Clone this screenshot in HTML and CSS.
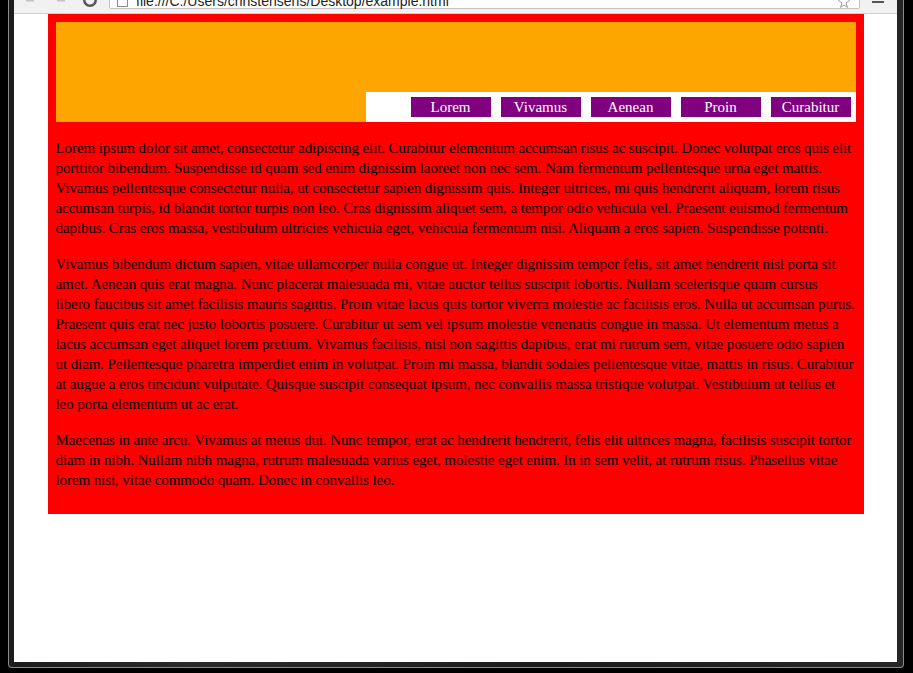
FILE: index.html
```html
<!DOCTYPE html>
<html>
<head>
<meta charset="utf-8">
<title>example</title>
<link rel="stylesheet" href="styles.css">
</head>
<body>
<div class="screen">
  <div class="win">
    <div class="toolbar">
      <div class="navbtns">
        <svg width="90" height="13" viewBox="0 0 90 13">
          <rect x="12" y="0" width="8" height="1.5" fill="#c4c4c4"/>
          <rect x="43" y="0" width="8" height="1.5" fill="#c4c4c4"/>
          <path d="M69 0 A7 7 0 0 0 83 0 L80.5 0 A4.5 4.5 0 0 1 71.5 0 Z" fill="#555"/>
        </svg>
      </div>
      <div class="omnibox">
        <span class="pageicon"></span>
        <span class="url">file:///C:/Users/christensens/Desktop/example.html</span>
        <svg class="star" width="14" height="8" viewBox="0 0 14 8">
          <path d="M1 0 L5 3 L3.5 7.5 L7 5 L10.5 7.5 L9 3 L13 0" fill="none" stroke="#9a9a9a" stroke-width="1"/>
        </svg>
      </div>
      <div class="menu"></div>
    </div>
    <div class="page">
      <div class="container">
        <div class="header">
          <ul class="nav">
            <li class="nav-item">Lorem</li>
            <li class="nav-item">Vivamus</li>
            <li class="nav-item">Aenean</li>
            <li class="nav-item">Proin</li>
            <li class="nav-item">Curabitur</li>
          </ul>
        </div>
        <p class="text">Lorem ipsum dolor sit amet, consectetur adipiscing elit. Curabitur elementum accumsan risus ac suscipit. Donec volutpat eros quis elit porttitor bibendum. Suspendisse id quam sed enim dignissim laoreet non nec sem. Nam fermentum pellentesque urna eget mattis. Vivamus pellentesque consectetur nulla, ut consectetur sapien dignissim quis. Integer ultrices, mi quis hendrerit aliquam, lorem risus accumsan turpis, id blandit tortor turpis non leo. Cras dignissim aliquet sem, a tempor odio vehicula vel. Praesent euismod fermentum dapibus. Cras eros massa, vestibulum ultricies vehicula eget, vehicula fermentum nisi. Aliquam a eros sapien. Suspendisse potenti.</p>
        <p class="text">Vivamus bibendum dictum sapien, vitae ullamcorper nulla congue ut. Integer dignissim tempor felis, sit amet hendrerit nisl porta sit amet. Aenean quis erat magna. Nunc placerat malesuada mi, vitae auctor tellus suscipit lobortis. Nullam scelerisque quam cursus libero faucibus sit amet facilisis mauris sagittis. Proin vitae lacus quis tortor viverra molestie ac facilisis eros. Nulla ut accumsan purus. Praesent quis erat nec justo lobortis posuere. Curabitur ut sem vel ipsum molestie venenatis congue in massa. Ut elementum metus a lacus accumsan eget aliquet lorem pretium. Vivamus facilisis, nisl non sagittis dapibus, erat mi rutrum sem, vitae posuere odio sapien ut diam. Pellentesque pharetra imperdiet enim in volutpat. Proin mi massa, blandit sodales pellentesque vitae, mattis in risus. Curabitur at augue a eros tincidunt vulputate. Quisque suscipit consequat ipsum, nec convallis massa tristique volutpat. Vestibulum ut tellus et leo porta elementum ut ac erat.</p>
        <p class="text">Maecenas in ante arcu. Vivamus at metus dui. Nunc tempor, erat ac hendrerit hendrerit, felis elit ultrices magna, facilisis suscipit tortor diam in nibh. Nullam nibh magna, rutrum malesuada varius eget, molestie eget enim. In in sem velit, at rutrum risus. Phasellus vitae lorem nisi, vitae commodo quam. Donec in convallis leo.</p>
      </div>
    </div>
  </div>
</div>
</body>
</html>
```
FILE: styles.css
```css
html, body {
  margin: 0;
  padding: 0;
  background: #000;
}

.screen {
  width: 913px;
  height: 673px;
  box-sizing: border-box;
  padding: 0 9px 5px 8px;
  background: #000;
  display: flex;
  overflow: hidden;
}

.win {
  flex: 1;
  display: flex;
  flex-direction: column;
  background: linear-gradient(to right, #1c1c1c, #2a2a2a 20%, #1c1c1c 60%, #262626);
  padding: 0 6px 5px 5px;
  border: 1px solid #8a8a8a;
  border-top: none;
  border-radius: 0 0 4px 4px;
}

.toolbar {
  height: 13px;
  border-bottom: 1px solid #cfcfcf;
  background: #f1f1f1;
  display: flex;
  align-items: flex-start;
  overflow: hidden;
}

.navbtns {
  width: 95px;
  height: 13px;
  flex: none;
}

.navbtns svg {
  display: block;
}

.omnibox {
  flex: none;
  width: 749px;
  height: 28px;
  margin-top: -21px;
  background: #fff;
  border: 1px solid #c2c2c2;
  border-radius: 2px;
  display: flex;
  align-items: flex-end;
  box-sizing: content-box;
  position: relative;
}

.pageicon {
  width: 9px;
  height: 10px;
  border: 1px solid #8c8c8c;
  margin: 0 8px 1px 7px;
  flex: none;
  background: #fff;
}

.url {
  font-family: "Liberation Sans", Arial, sans-serif;
  font-size: 14px;
  line-height: 16px;
  color: #222;
  margin-bottom: -1px;
  white-space: nowrap;
}

.star {
  position: absolute;
  right: 8px;
  bottom: 0;
}

.menu {
  width: 12px;
  height: 2px;
  margin: 1px 0 0 12px;
  background: #555;
  flex: none;
}

.page {
  flex: 1;
  background: #fff;
  min-height: 0;
}

.container {
  width: 800px;
  margin: 0 auto;
  padding: 8px;
  background: #ff0000;
}

.header {
  height: 100px;
  background: #ffa500;
  display: flex;
  flex-direction: column;
  justify-content: flex-end;
  align-items: flex-end;
}

.nav {
  list-style: none;
  margin: 0;
  width: 490px;
  height: 30px;
  box-sizing: border-box;
  padding: 5px 5px 5px 0;
  background: #fff;
  display: flex;
  justify-content: flex-end;
  gap: 10px;
}

.nav-item {
  width: 80px;
  height: 20px;
  background: #800080;
  color: #fff;
  font-family: "Liberation Serif", "Times New Roman", serif;
  font-size: 15px;
  line-height: 20px;
  text-align: center;
}

.text {
  margin: 16px 0;
  font-family: "Liberation Serif", "Times New Roman", serif;
  font-size: 15px;
  letter-spacing: -0.09px;
  line-height: 20px;
  color: #000;
}
```
